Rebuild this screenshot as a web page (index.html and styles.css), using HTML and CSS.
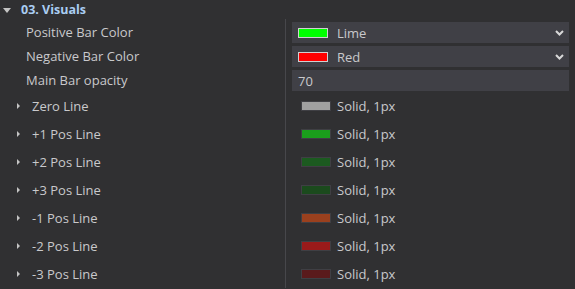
FILE: index.html
```html
<!DOCTYPE html>
<html lang="en">
<head>
  <meta charset="UTF-8" />
  <title>Visuals settings</title>
  <link rel="stylesheet" href="styles.css">
</head>
<body>
  <div class="panel">
    <!-- Group header -->
    <div class="group-head">
      <span class="caret-down"></span>
      <span class="group-title">03. Visuals</span>
    </div>

    <div class="group-body">
      <div class="row">
        <div class="label">Positive Bar Color</div>
        <div class="value">
          <div class="field select">
            <span class="chip" style="background:#00ff00"></span>
            <span class="field-text">Lime</span>
            <svg class="chevron" width="9" height="6" viewBox="0 0 9 6"><path d="M1 1 L4.5 4.5 L8 1" fill="none" stroke="#d8d8d8" stroke-width="2"/></svg>
          </div>
        </div>
      </div>
      <div class="row">
        <div class="label">Negative Bar Color</div>
        <div class="value">
          <div class="field select">
            <span class="chip" style="background:#ff0000"></span>
            <span class="field-text">Red</span>
            <svg class="chevron" width="9" height="6" viewBox="0 0 9 6"><path d="M1 1 L4.5 4.5 L8 1" fill="none" stroke="#d8d8d8" stroke-width="2"/></svg>
          </div>
        </div>
      </div>
      <div class="row">
        <div class="label">Main Bar opacity</div>
        <div class="value">
          <div class="field"><span class="num">70</span></div>
        </div>
      </div>

      <!-- Line styles (collapsed) -->
      <div class="lines">
        <div class="line-row">
          <div class="label sub"><span class="caret-right"></span>Zero Line</div>
          <div class="value"><span class="line-chip" style="background:#a0a0a0"></span><span class="field-text">Solid, 1px</span></div>
        </div>
        <div class="line-row">
          <div class="label sub"><span class="caret-right"></span>+1 Pos Line</div>
          <div class="value"><span class="line-chip" style="background:#1a9e1c"></span><span class="field-text">Solid, 1px</span></div>
        </div>
        <div class="line-row">
          <div class="label sub"><span class="caret-right"></span>+2 Pos Line</div>
          <div class="value"><span class="line-chip" style="background:#1c5a20"></span><span class="field-text">Solid, 1px</span></div>
        </div>
        <div class="line-row">
          <div class="label sub"><span class="caret-right"></span>+3 Pos Line</div>
          <div class="value"><span class="line-chip" style="background:#1b4a1d"></span><span class="field-text">Solid, 1px</span></div>
        </div>
        <div class="line-row">
          <div class="label sub"><span class="caret-right"></span>-1 Pos Line</div>
          <div class="value"><span class="line-chip" style="background:#9a401e"></span><span class="field-text">Solid, 1px</span></div>
        </div>
        <div class="line-row">
          <div class="label sub"><span class="caret-right"></span>-2 Pos Line</div>
          <div class="value"><span class="line-chip" style="background:#9a1a1a"></span><span class="field-text">Solid, 1px</span></div>
        </div>
        <div class="line-row">
          <div class="label sub"><span class="caret-right"></span>-3 Pos Line</div>
          <div class="value"><span class="line-chip" style="background:#5a1a1c"></span><span class="field-text">Solid, 1px</span></div>
        </div>
      </div>
    </div>
  </div>
</body>
</html>
```

FILE: styles.css
```css
body {
  margin: 0;
  background: #303032;
  font-family: "Open Sans", "Liberation Sans", sans-serif;
  font-size: 13px;
  color: #c9c9cc;
}

.panel {
  width: 575px;
  height: 289px;
  overflow: hidden;
}

/* header */
.group-head {
  height: 19px;
  display: flex;
  align-items: center;
}

.caret-down {
  width: 0;
  height: 0;
  margin: 1px 10px 0 3px;
  border-left: 4px solid transparent;
  border-right: 4px solid transparent;
  border-top: 5px solid #c4c4c4;
}

.group-title {
  font-weight: 700;
  font-size: 12.5px;
  color: #aacdf2;
}

/* body with column divider */
.group-body {
  padding-top: 2px;
  background: linear-gradient(#47474b, #47474b) no-repeat 285px 0 / 1px 100%;
}

.row {
  display: grid;
  grid-template-columns: 286px 1fr;
  height: 24px;
}

.row .label {
  padding-left: 26px;
  line-height: 21px;
  margin-top: 1px;
}

.row .value {
  padding: 1px 6px 0 6px;
}

.field {
  height: 21px;
  background: #404046;
  display: flex;
  align-items: center;
  padding: 0 6px;
}

.chip {
  width: 28px;
  height: 8px;
  border: 1px solid #d0d0d0;
  margin-right: 9px;
}

.field-text {
  flex: 1;
}

.num {
  color: #c9c9cc;
}

.chevron {
  margin-right: -1px;
}

/* collapsible line rows */
.lines {
  margin-top: -1px;
}

.line-row {
  display: grid;
  grid-template-columns: 286px 1fr;
  height: 28px;
  align-items: center;
}

.label.sub {
  display: flex;
  align-items: center;
  padding-left: 17px;
}

.caret-right {
  width: 0;
  height: 0;
  margin-right: 12px;
  border-top: 3px solid transparent;
  border-bottom: 3px solid transparent;
  border-left: 3px solid #c4c4c4;
}

.line-row .value {
  display: flex;
  align-items: center;
  padding-left: 15px;
}

.line-chip {
  width: 28px;
  height: 8px;
  border: 1px solid #3f3f44;
  margin-right: 6px;
}
```
